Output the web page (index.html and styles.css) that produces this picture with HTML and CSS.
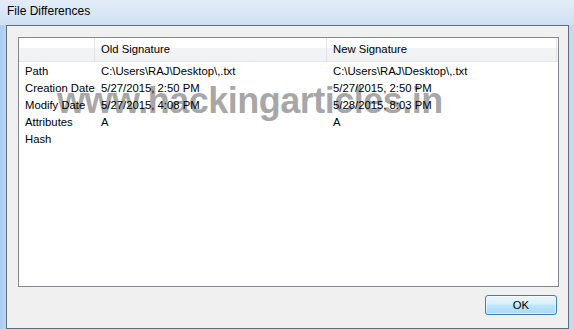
FILE: index.html
```html
<!DOCTYPE html>
<html lang="en">
<head>
  <meta charset="UTF-8">
  <title>File Differences</title>
  <link rel="stylesheet" href="styles.css">
</head>
<body>
  <div class="window">
    <div class="titlebar">File Differences</div>
    <div class="client">
      <div class="list">
        <div class="grid">
          <div class="head"></div>
          <div class="head">Old Signature</div>
          <div class="head">New Signature</div>
          <div class="head last"></div>

          <div class="cell">Path</div>
          <div class="cell">C:\Users\RAJ\Desktop\,.txt</div>
          <div class="cell">C:\Users\RAJ\Desktop\,.txt</div>
          <div class="cell"></div>

          <div class="cell">Creation Date</div>
          <div class="cell">5/27/2015, 2:50 PM</div>
          <div class="cell">5/27/2015, 2:50 PM</div>
          <div class="cell"></div>

          <div class="cell">Modify Date</div>
          <div class="cell">5/27/2015, 4:08 PM</div>
          <div class="cell">5/28/2015, 8:03 PM</div>
          <div class="cell"></div>

          <div class="cell">Attributes</div>
          <div class="cell">A</div>
          <div class="cell">A</div>
          <div class="cell"></div>

          <div class="cell">Hash</div>
          <div class="cell"></div>
          <div class="cell"></div>
          <div class="cell"></div>
        </div>
        <div class="watermark">www.hackingarticles.in</div>
      </div>
      <div class="buttons">
        <button class="ok">OK</button>
      </div>
    </div>
  </div>
</body>
</html>
```

FILE: styles.css
```css
body {
  margin: 0;
  width: 574px;
  height: 329px;
  overflow: hidden;
  background: linear-gradient(90deg, #a9cdf2 0px, #b9d6f3 6px, #d3e3f4 40%, #c4d9ef 100%);
  font-family: 'Liberation Sans', Arial, sans-serif;
  font-size: 11.3px;
  color: #000;
}

.window {
  display: flex;
  flex-direction: column;
  height: 329px;
}

.titlebar {
  height: 25px;
  line-height: 22px;
  padding-left: 7px;
  font-size: 12px;
  background: linear-gradient(#e3edf8, #cfe0f2);
  color: #000;
}

.client {
  flex: 1;
  margin: 0 5px 0 6px;
  border: 1px solid #5f6d7e;
  background-color: #f0f0f0;
  padding: 11px 9px 13px 11px;
  display: flex;
  flex-direction: column;
}

.list {
  position: relative;
  flex: 1;
  background-color: #fff;
  border: 1px solid #828790;
  overflow: hidden;
}

.grid {
  position: relative;
  z-index: 1;
  display: grid;
  grid-template-columns: 76px 232px 230px 1fr;
}

.head {
  height: 23px;
  line-height: 23px;
  padding-left: 6px;
  border-right: 1px solid #e3e4e6;
  border-bottom: 1px solid #e5e5e5;
  background: linear-gradient(#ffffff 0, #ffffff 45%, #f2f3f5 45%, #f1f2f4 100%);
  margin-bottom: 1px;
}

.head.last {
  border-right: none;
}

.cell {
  height: 17px;
  line-height: 17px;
  padding-left: 6px;
  white-space: nowrap;
}

.watermark {
  position: absolute;
  left: 38px;
  top: 42px;
  font-weight: bold;
  font-size: 36px;
  letter-spacing: -0.5px;
  color: rgba(128, 128, 128, 0.7);
  z-index: 0;
}

.buttons {
  display: flex;
  justify-content: flex-end;
  padding: 8px 2px 0 0;
}

.ok {
  width: 72px;
  height: 20px;
  border: 1px solid #3c7fb1;
  border-radius: 3px;
  background: linear-gradient(#eaf6fd 0, #d9f0fc 45%, #bee6fd 50%, #a7d9f5 100%);
  box-shadow: inset 0 0 0 1px rgba(255, 255, 255, 0.6);
  font-family: 'Liberation Sans', Arial, sans-serif;
  font-size: 11.3px;
  color: #000;
  padding: 0;
}
```
